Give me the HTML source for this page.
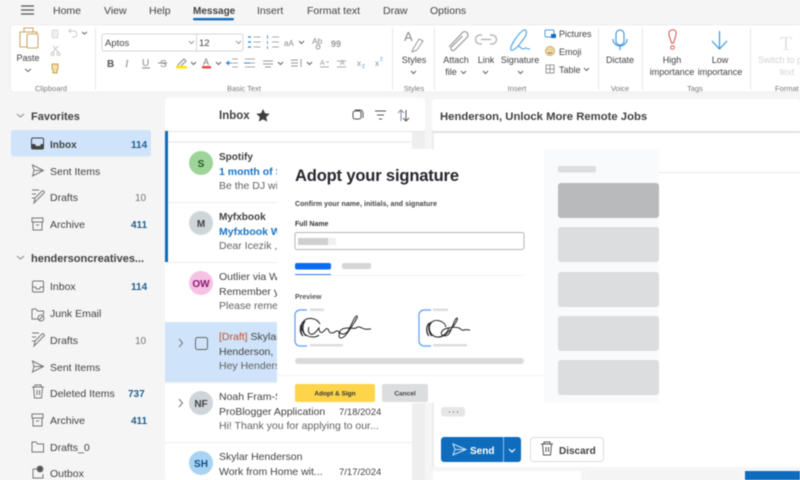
<!DOCTYPE html>
<html><head><meta charset="utf-8"><style>
html,body{margin:0;padding:0;width:800px;height:480px;overflow:hidden;background:#f5f5f5}
svg{display:block;filter:blur(.45px)}
text{font-family:"Liberation Sans",sans-serif;fill:#424242;font-size:10.5px}
.b{font-weight:700}
.g{fill:#616161}
.c{text-anchor:middle}
.r{font-size:9px}
.l{font-size:7.5px;fill:#777}
.n{font-size:10.5px;fill:#424242}
.ic{fill:none;stroke:#616161;stroke-width:1}
</style></head><body>
<svg width="800" height="480" viewBox="0 0 800 480" xmlns="http://www.w3.org/2000/svg">
<rect width="800" height="480" fill="#f5f5f5"/>
<!-- top tabs -->
<path d="M21 6h13M21 10h13M21 14h13" stroke="#555" stroke-width="1.2" fill="none"/>
<text x="53" y="14">Home</text><text x="104" y="14">View</text><text x="149" y="14">Help</text>
<text x="193" y="14" class="b" style="font-size:10px">Message</text><rect x="193" y="18" width="41" height="2.4" rx="1" fill="#0f6cbd"/>
<text x="257" y="14">Insert</text><text x="307" y="14">Format text</text><text x="383" y="14">Draw</text><text x="430" y="14">Options</text>
<!-- ribbon -->
<rect x="10" y="25" width="800" height="67" rx="4" fill="#fff" stroke="#e3e3e3" stroke-width=".6"/>
<g stroke="#e6e6e6"><path d="M95.500 28v62M392.500 28v62M434.500 28v62M598.500 28v62M642.500 28v62M750.500 28v62"/></g>
<!-- clipboard -->
<path d="M20 32h17v15h-17zM24 28h9v4h-9z" fill="none" stroke="#c9a96a" stroke-width="1.1"/>
<rect x="27" y="34" width="11" height="14" rx="1.500" fill="#fff" stroke="#c9a96a" stroke-width="1.100"/>
<text x="28" y="61" class="c r">Paste</text>
<path d="M25 69l3 2.500 3-2.500" class="ic"/>
<rect x="52" y="30" width="6" height="8" rx="1" fill="#eee" stroke="#ddd"/>
<path d="M70 31h4a3 3 0 0 1 0 6h-2M71 29l-2 2 2 2" fill="none" stroke="#ccc"/>
<path d="M82 32l2.500 2 2.500-2" class="ic"/>
<path d="M53 46l5 6M58 46l-5 6" stroke="#c8c8c8" fill="none"/><circle cx="52.500" cy="54" r="1.500" fill="none" stroke="#c8c8c8"/><circle cx="58.500" cy="54" r="1.500" fill="none" stroke="#c8c8c8"/>
<path d="M52 64h6v5l-1 1v3h-4v-3l-1-1z" fill="#f2e0a8" stroke="#c9a050"/>
<text x="51" y="91" class="c l">Clipboard</text>
<!-- font -->
<rect x="102" y="34" width="141" height="17" rx="2" fill="#fff" stroke="#d6d6d6"/><path d="M196.500 34v17" stroke="#d6d6d6"/>
<text x="105" y="46" style="font-size:9.500px">Aptos</text><text x="199" y="46" style="font-size:9.500px">12</text>
<path d="M189 41l2.500 2.500 2.500-2.500M236 41l2.500 2.500 2.500-2.500" fill="none" stroke="#999"/>
<path d="M253.500 37h7M253.500 42h7M253.500 47h7" stroke="#aaa" fill="none"/><path d="M248 37h3M248 42h3M248 47h3" stroke="#3a96dd" stroke-width="1.500"/>
<path d="M272 37h7M272 42h7M272 47h7" stroke="#aaa" fill="none"/><path d="M267.500 35v4M267.500 41v3M267.500 46v3" stroke="#5a9bd8"/>
<text x="284" y="46" style="font-size:8px;fill:#888">aA</text><path d="M299 41l2.500 2.500 2.500-2.500" class="ic"/>
<text x="312" y="44" style="font-size:8.500px;fill:#888">Ab</text><path d="M318 45a2 2 0 1 0 .1 0z" fill="none" stroke="#999"/>
<text x="331" y="47" style="font-size:9px;font-weight:700;fill:#999">99</text>
<text x="107" y="67" class="b" style="font-size:10px;fill:#555">B</text>
<text x="125" y="67" style="font-size:10.500px;font-style:italic;fill:#888;font-family:'Liberation Serif',serif">I</text>
<text x="142" y="66" style="font-size:10px;fill:#888">U</text><path d="M142 68h8" stroke="#888"/>
<text x="160" y="67" style="font-size:10px;fill:#888">S</text><path d="M158 63h9" stroke="#888"/>
<path d="M178 65l6-6 2 2-6 6h-2z" fill="none" stroke="#888"/><rect x="176" y="66" width="11" height="2.500" fill="#ffe600"/>
<path d="M191 62l2.500 2.500 2.500-2.500" class="ic"/>
<text x="203" y="65" style="font-size:9px;fill:#777">A</text><rect x="202" y="66" width="9" height="2.500" fill="#e8474a"/>
<path d="M216 62l2.500 2.500 2.500-2.500" class="ic"/>
<path d="M232 59h6M232 63h6M232 67h6" stroke="#aaa"/><path d="M226.500 63h5M226.500 63l2-1.500v3z" stroke="#2b88d8" fill="#2b88d8"/>
<path d="M245 59h10M250 63h5M245 67h10" stroke="#aaa"/><path d="M244 63h6" stroke="#2b88d8"/>
<path d="M263 61h10M263 64h10M265 67h6" stroke="#999"/><path d="M278 62l2.500 2.500 2.500-2.500" class="ic"/>
<path d="M291 60h7M291 63h7M291 66h7M301 59v8" stroke="#999"/><path d="M307 62l2.500 2.500 2.500-2.500" class="ic"/>
<text x="320" y="65" style="font-size:7px;fill:#999">A</text><path d="M320 67h9M326 62h3" stroke="#aaa"/>
<text x="340" y="65" style="font-size:7px;fill:#999">A</text><path d="M337 61h9M337 67h9" stroke="#aaa"/>
<text x="357" y="66" style="font-size:8px;fill:#888">x</text><text x="362" y="68" style="font-size:5px;fill:#4a90d8">2</text>
<text x="375" y="66" style="font-size:8px;fill:#888">x</text><text x="380" y="61" style="font-size:5px;fill:#4a90d8">2</text>
<text x="244" y="91" class="c l">Basic Text</text>
<!-- styles -->
<text x="404" y="41" style="font-size:13px;fill:#888">A</text><path d="M413 49l6-10 4 2-6 9-5 2z" fill="none" stroke="#999"/>
<text x="414" y="63" class="c r">Styles</text><path d="M411 71l2.500 2.500 2.500-2.500" class="ic"/>
<text x="414" y="91" class="c l">Styles</text>
<!-- insert -->
<path d="M449 47l14-15a3.500 3.500 0 0 1 4.500 5l-13 13a2 2 0 0 1-3-3l11-11" fill="none" stroke="#999" stroke-width="1.200"/>
<text x="456" y="63" class="c r">Attach</text><text x="451" y="75" class="c r">file</text><path d="M461 71l2.500 2.500 2.500-2.500" class="ic"/>
<path d="M482 35h-2a4.500 4.500 0 0 0 0 9h2M490 35h2a4.500 4.500 0 0 1 0 9h-2M481 39.500h10" fill="none" stroke="#aaa" stroke-width="1.200"/>
<text x="486" y="63" class="c r">Link</text><path d="M483 71l2.500 2.500 2.500-2.500" class="ic"/>
<path d="M511 50c-2-3 8-18 13-20 3-1 3 3 1 7l-6 8c-3 4-7 6-8 5zM518 46c2 0 3 3 5 3 1 0 2-1 3-1 1 1 2 1 4 1" fill="none" stroke="#5aa7e8" stroke-width="1.200"/>
<text x="520" y="63" class="c r">Signature</text><path d="M518 71l2.500 2.500 2.500-2.500" class="ic"/>
<rect x="545" y="30" width="9" height="7" rx="1" fill="none" stroke="#4a9ae0"/><rect x="551" y="34" width="5" height="4" fill="#0f6cbd"/>
<text x="559" y="37" class="r">Pictures</text>
<circle cx="550" cy="51" r="4.500" fill="#f0dba8" stroke="#c8a860"/><path d="M548 50h.5M551.500 50h.5M548 53h4" stroke="#8a7030"/>
<text x="559" y="55" class="r">Emoji</text>
<rect x="546" y="65" width="8" height="8" fill="none" stroke="#999"/><path d="M546 69h8M550 65v8" stroke="#999"/>
<text x="559" y="73" class="r">Table</text><path d="M584 68l2.500 2.500 2.500-2.500" class="ic"/>
<text x="517" y="91" class="c l">Insert</text>
<!-- voice -->
<rect x="616" y="30" width="8" height="15" rx="4" fill="none" stroke="#4a9ae0" stroke-width="1.200"/><path d="M613 39a7 7 0 0 0 14 0M620 46v4" fill="none" stroke="#4a9ae0" stroke-width="1.200"/>
<text x="620" y="63" class="c r">Dictate</text>
<text x="620" y="91" class="c l">Voice</text>
<!-- tags -->
<path d="M669 32c2-3 6-3 7 0 1 3-2 8-2.500 11h-2c-.5-3-3.500-8-2.500-11z" fill="none" stroke="#d65c5c" stroke-width="1.100"/><circle cx="672.500" cy="47.500" r="1.800" fill="none" stroke="#d65c5c"/>
<text x="672" y="63" class="c r">High</text><text x="672" y="75" class="c r">importance</text>
<path d="M719.500 31v18M712 41l7.500 8 7.500-8" fill="none" stroke="#3a96dd" stroke-width="1.200"/>
<text x="720" y="63" class="c r">Low</text><text x="720" y="75" class="c r">importance</text>
<text x="695" y="91" class="c l">Tags</text>
<text x="786" y="50" class="c" style="font-size:20px;fill:#e2e2e2;font-family:'Liberation Serif',serif">T</text>
<text x="758" y="63" class="r" style="fill:#d4d4d4">Switch to plain</text><text x="787" y="75" class="c r" style="fill:#d4d4d4">text</text>
<text x="775" y="91" class="l">Format</text>

<!-- nav -->
<path d="M17 114l3.500 3 3.500-3M17 256l3.500 3 3.500-3" fill="none" stroke="#888"/>
<text x="31" y="120" class="b" style="font-size:11px">Favorites</text>
<text x="31" y="262" class="b" style="font-size:11px">hendersoncreatives...</text>
<rect x="11" y="130" width="140" height="26.500" rx="3" fill="#cfe4fa"/>
<text x="50" y="148" class="n b" style="font-size:10px">Inbox</text><text x="131" y="148" class="b" style="font-size:10px;fill:#1f5f8f">114</text>
<text x="50" y="175" class="n g">Sent Items</text>
<text x="50" y="201" class="n g">Drafts</text><text x="135" y="201" style="font-size:10px;fill:#777">10</text>
<text x="50" y="228" class="n g">Archive</text><text x="131" y="228" class="b" style="font-size:10px;fill:#1f5f8f">411</text>
<text x="50" y="290" class="n g">Inbox</text><text x="131" y="290" class="b" style="font-size:10px;fill:#1f5f8f">114</text>
<text x="50" y="317" class="n g">Junk Email</text>
<text x="50" y="344" class="n g">Drafts</text><text x="135" y="344" style="font-size:10px;fill:#777">10</text>
<text x="50" y="371" class="n g">Sent Items</text>
<text x="50" y="397" class="n g">Deleted Items</text><text x="128" y="397" class="b" style="font-size:10px;fill:#1f5f8f">737</text>
<text x="50" y="424" class="n g">Archive</text><text x="131" y="424" class="b" style="font-size:10px;fill:#1f5f8f">411</text>
<text x="50" y="451" class="n g">Drafts_0</text>
<text x="50" y="477" class="n g">Outbox</text>
<!-- nav icons -->
<path d="M33 138h9a1.500 1.500 0 0 1 1.500 1.500v8a1.500 1.500 0 0 1-1.500 1.500h-9a1.500 1.500 0 0 1-1.500-1.500v-8a1.500 1.500 0 0 1 1.500-1.500z" fill="none" stroke="#444"/><path d="M32 144h3l1 2h4l1-2h3v4a1 1 0 0 1-1 1h-10a1 1 0 0 1-1-1z" fill="#444"/>
<g fill="none" stroke="#777">
<path d="M32.500 165l11 5.500-11 5.500 1.500-5.500zM34 170.500h9.500"/>
<path d="M32 191h7M32 195h4M32 199h3M34 204l1-5 7-7c1-1 3 1 2 2l-7 7z" transform="translate(0,-1)"/>
<path d="M32 218h11v4h-11zM33 222v8h9v-8M36 225h3"/>
<rect x="32.500" y="281" width="11" height="11" rx="1.500"/><path d="M32.500 287h3l1 2h3l1-2h3"/>
<path d="M32 309v10h6M32 309h4l1.500 2h6v4"/><circle cx="41" cy="318" r="3"/><path d="M39 320l4-4"/>
<path d="M32 334h7M32 338h4M32 342h3M34 347l1-5 7-7c1-1 3 1 2 2l-7 7z" transform="translate(0,-1)"/>
<path d="M32.500 361l11 5.500-11 5.500 1.500-5.500zM34 366.500h9.500"/>
<path d="M32 387h12M35 387v-2h6v2M33.500 387l1 11h7l1-11M37 390v5M39.500 390v5"/>
<path d="M32 414h11v4h-11zM33 418v8h9v-8M36 421h3"/>
<path d="M32 442h4l1.500 2h6v8h-11.500z"/>
<path d="M33 469h4M33 469v9h10v-4"/><circle cx="40" cy="469" r="3" fill="#555"/>
</g>

<!-- list -->
<rect x="165" y="98" width="260" height="33" rx="3" fill="#fff"/>
<rect x="165" y="131" width="247" height="349" fill="#fff"/>
<rect x="412" y="131" width="13" height="349" fill="#eeeeee"/>
<rect x="165" y="131" width="260" height="1" fill="#e6e6e6"/>
<text x="219" y="119" style="font-size:11.500px" class="b">Inbox</text>
<path d="M263 109l2 4.300 4.700.5-3.500 3.200 1 4.600-4.200-2.400-4.200 2.400 1-4.600-3.500-3.200 4.700-.5z" fill="#3f3f3f"/>
<g fill="none" stroke="#555"><rect x="353" y="111" width="8" height="8" rx="2"/><path d="M355 110h5a3 3 0 0 1 3 3v5"/><path d="M375 111h11M377 115h7M379 119h3"/></g>
<path d="M401 121v-11M398 113l3-3 3 3" fill="none" stroke="#7d8aa0"/><path d="M406 110v11M403 118l3 3 3-3" fill="none" stroke="#555"/>
<rect x="165" y="141" width="247" height="2" fill="#f0f0f0"/>
<rect x="165" y="131" width="3" height="131" fill="#0f6cbd"/>
<path d="M168 202.500h244M168 262.500h244M165 442.500h247" stroke="#ececec"/>
<rect x="165" y="322" width="247" height="60" fill="#cfe4fa"/>
<path d="M165 382.500h247" stroke="#ececec"/>
<!-- avatars -->
<circle cx="201" cy="163" r="12" fill="#9ed49a"/><text x="201" y="167" class="c b" style="font-size:10px;fill:#1f5a22">S</text>
<circle cx="201" cy="223" r="12" fill="#cfd6d9"/><text x="201" y="227" class="c b" style="font-size:10px;fill:#444">M</text>
<circle cx="201" cy="283" r="12" fill="#f5c2e6"/><text x="201" y="287" class="c b" style="font-size:10px;fill:#8a1a6a">OW</text>
<circle cx="201" cy="403" r="12" fill="#cfd6d9"/><text x="201" y="407" class="c b" style="font-size:10px;fill:#444">NF</text>
<circle cx="201" cy="463" r="12" fill="#a9d3f2"/><text x="201" y="467" class="c b" style="font-size:10px;fill:#10508a">SH</text>
<rect x="195.500" y="337.500" width="12" height="12" rx="2" fill="none" stroke="#666"/>
<path d="M179 339l3.500 4-3.500 4M179 399l3.500 4-3.500 4" fill="none" stroke="#777"/>
<!-- list text -->
<g style="font-size:10.500px">
<text x="219" y="160" class="b" style="font-size:10px">Spotify</text>
<text x="219" y="175" class="b" style="fill:#1a74c4">1 month of Spotify</text>
<text x="219" y="189" class="g">Be the DJ with</text>
<text x="219" y="220" class="b" style="font-size:10px">Myfxbook</text>
<text x="219" y="235" class="b" style="fill:#1a74c4">Myfxbook Weekly</text>
<text x="219" y="249" class="g">Dear Icezik ,</text>
<text x="219" y="280">Outlier via Work</text>
<text x="219" y="295">Remember your</text>
<text x="219" y="309" class="g">Please remember</text>
<text x="219" y="340"><tspan style="fill:#c4502a">[Draft]</tspan> Skylar H</text>
<text x="219" y="355">Henderson, Unl</text>
<text x="219" y="369" class="g">Hey Henderson</text>
<text x="219" y="400">Noah Fram-Schwartz</text>
<text x="219" y="415">ProBlogger Application</text><text x="339" y="415" style="font-size:9.500px">7/18/2024</text>
<text x="219" y="429" class="g">Hi! Thank you for applying to our...</text>
<text x="219" y="460">Skylar Henderson</text>
<text x="219" y="475">Work from Home wit...</text><text x="339" y="475" style="font-size:9.500px">7/17/2024</text>
</g>
<!-- reading pane -->
<rect x="432" y="99" width="368" height="32" rx="3" fill="#fff"/>
<rect x="432" y="131" width="368" height="2" fill="#e2e2e2"/>
<rect x="432" y="133" width="368" height="334" fill="#fff"/>
<rect x="432" y="133" width="2" height="334" fill="#ececec"/>
<text x="440" y="120" class="b" style="font-size:11.300px">Henderson, Unlock More Remote Jobs</text>
<path d="M659 172.500h141" stroke="#e8e8e8"/>
<rect x="441" y="407" width="24" height="9.500" rx="3" fill="#e6e6e6"/>
<path d="M449 412h1M453 412h1M457 412h1" stroke="#555"/>
<rect x="441" y="437" width="80" height="25" rx="3" fill="#0f6cbd"/>
<rect x="503" y="437" width="1" height="25" fill="#8ebde6"/>
<path d="M453 444l13 5.500-13 5.500 2-5.500zM455 449.500h11" fill="none" stroke="#cfe4fa"/>
<text x="470" y="454" class="b" style="font-size:10px;fill:#fff">Send</text>
<path d="M509 449l3 3 3-3" fill="none" stroke="#fff" stroke-width="1.200"/>
<rect x="530.500" y="437.500" width="73" height="24" rx="3" fill="#fff" stroke="#dcdcdc"/>
<path d="M541 444h12M544 444v-2h6v2M542.500 444l1 11h7l1-11M546 447v5M548.500 447v5" fill="none" stroke="#555"/>
<text x="559" y="454" class="b" style="font-size:10px">Discard</text>
<rect x="433" y="471" width="148" height="9" fill="#fff"/>
<rect x="588" y="471" width="150" height="9" fill="#f4f4f4"/>
<rect x="745" y="471" width="55" height="9" fill="#0f6cbd"/>

<!-- modal -->
<rect x="277" y="149" width="268" height="254" fill="#fff"/>
<rect x="544" y="149" width="115" height="254" fill="#f9fafc"/>
<rect x="558" y="166" width="38" height="6.500" rx="2" fill="#dcddde"/>
<rect x="558" y="183" width="101" height="35" rx="3" fill="#b9babb"/>
<rect x="558" y="227" width="101" height="35" rx="3" fill="#dcddde"/>
<rect x="558" y="272" width="101" height="35" rx="3" fill="#dcddde"/>
<rect x="558" y="316" width="101" height="35" rx="3" fill="#dcddde"/>
<rect x="558" y="360" width="101" height="35" rx="3" fill="#dcddde"/>
<text x="295" y="181" class="b" style="font-size:16.500px;fill:#26262e" textLength="164">Adopt your signature</text>
<text x="295" y="206" class="b" style="font-size:7px;fill:#444" textLength="142">Confirm your name, initials, and signature</text>
<text x="295" y="226" class="b" style="font-size:7px;fill:#333">Full Name</text>
<rect x="295" y="232.500" width="229" height="17" rx="2" fill="#fff" stroke="#b5b5b5"/>
<rect x="298" y="238" width="30" height="7" fill="#cfcfcf"/><rect x="328" y="238" width="8" height="7" fill="#f0f0f0"/>
<rect x="295" y="263" width="36" height="6.500" rx="2" fill="#0a6cf5"/>
<rect x="342" y="263" width="29" height="6" rx="2" fill="#d6d6d6"/>
<rect x="295" y="274" width="36" height="1.800" fill="#2f86f0"/>
<path d="M295 275.500h229" stroke="#f2f2f4"/>
<text x="295" y="299" class="b" style="font-size:7px;fill:#555">Preview</text>
<path d="M307 310h-7a5 5 0 0 0-5 5v26a5 5 0 0 0 5 5h7" fill="none" stroke="#5a9cf5" stroke-width="1.200"/>
<path d="M431 310h-7a5 5 0 0 0-5 5v26a5 5 0 0 0 5 5h7" fill="none" stroke="#5a9cf5" stroke-width="1.200"/>
<rect x="310" y="308.500" width="14" height="2.500" fill="#dcdcdc"/><rect x="310" y="344" width="33" height="2.500" fill="#dcdcdc"/>
<rect x="433" y="308.500" width="15" height="2.500" fill="#dcdcdc"/><rect x="433" y="344" width="34" height="2.500" fill="#dcdcdc"/>
<g fill="none" stroke="#222" stroke-width="1">
<path d="M320 324c-3-6-13-8-17-2-4 7 1 15 10 15 3 0 5-1 6-2"/>
<path d="M303 322c-3 4-3 11 0 14M305 321c-3 4-3 11 1 15M301 325c-1 3-1 7 1 10" stroke-width="1.200"/>
<path d="M309 327c-2 5 1 8 4 7 3-1 4-4 6-6 0 4 2 6 5 3 2-2 2-3 4-2 1 2 1 4 4 4 3 0 4-3 6-2 3 2-1 7 3 7 4 0 9-9 13-15 2-3 4-6 3-7-2-1-6 10-9 15-2 3-6 4-8 2-1-3 3-5 8-5 4 0 6 1 8 0 2-2 4-1 6 0 3 2 6 1 9 1"/>
</g>
<g fill="none" stroke="#222" stroke-width="1">
<path d="M446 327c-1-6-11-9-15-4-4 6 0 14 7 14 5 0 9-4 11-9"/>
<path d="M429 323c-3 4-3 10 0 13M431 322c-3 4-3 10 1 14" stroke-width="1.200"/>
<path d="M438 337c5 1 12-6 17-13 2-3 3-6 2-6-2 0-5 10-7 14-1 3-5 5-8 3-2-3 1-6 6-7 4-1 9-1 11 0 2 1 3 3 5 2 2-1 3 0 6 0"/>
</g>
<rect x="295" y="358" width="229" height="6" rx="3" fill="#dadada"/>
<path d="M277 375.500h268" stroke="#f3f3f5"/>
<rect x="295" y="384" width="80" height="18" rx="2" fill="#fdd44a"/>
<text x="335" y="395.500" class="c b" style="font-size:6.500px;fill:#333">Adopt &amp; Sign</text>
<rect x="382" y="384" width="46" height="18" rx="2" fill="#dcdddf"/>
<text x="405" y="395.500" class="c b" style="font-size:6.500px;fill:#444">Cancel</text>
</svg>
</body></html>
